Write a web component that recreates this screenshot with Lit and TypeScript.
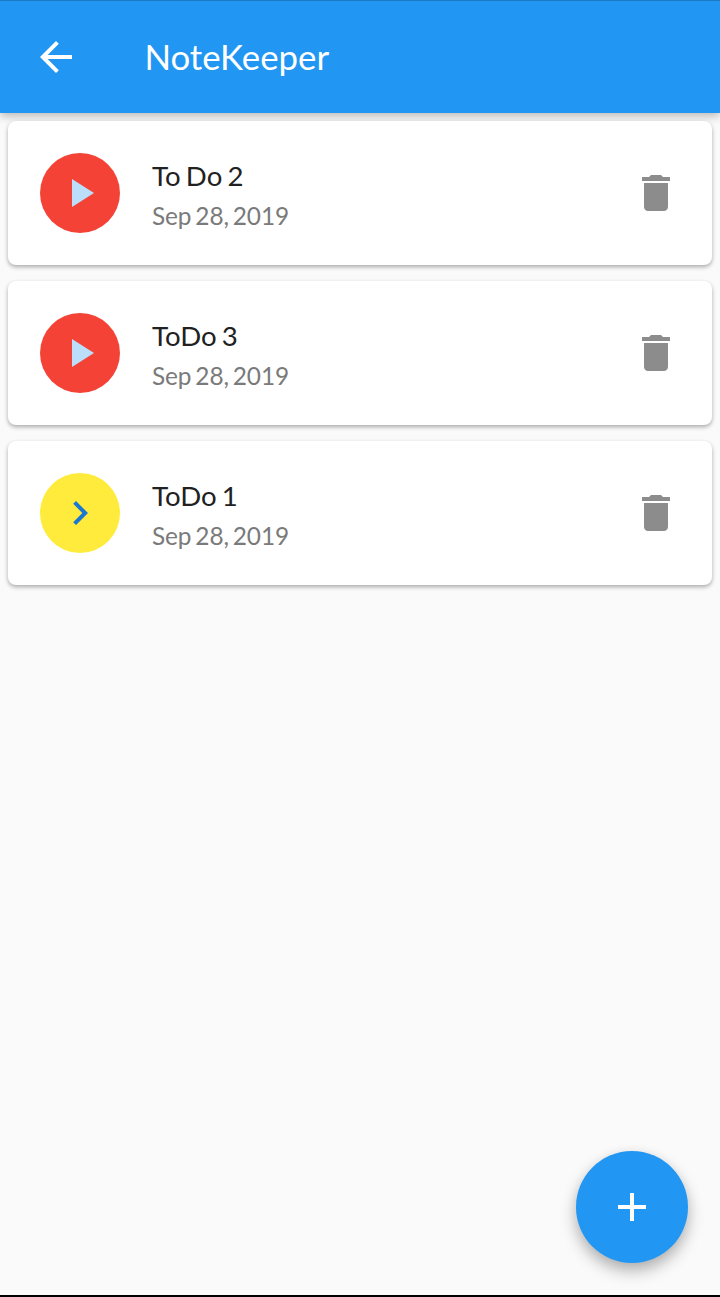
import { LitElement, html, css } from "lit";
import { customElement } from "lit/decorators.js";

const notes = [
  { title: "To Do 2", date: "Sep 28, 2019", high: true },
  { title: "ToDo 3", date: "Sep 28, 2019", high: true },
  { title: "ToDo 1", date: "Sep 28, 2019", high: false },
];

const icons = {
  back: "M20 11H7.83l5.59-5.59L12 4l-8 8 8 8 1.41-1.41L7.83 13H20v-2z",
  play: "M8 5v14l11-7z",
  chevron: "M10 6L8.59 7.41 13.17 12l-4.58 4.59L10 18l6-6z",
  trash: "M6 19c0 1.1.9 2 2 2h8c1.1 0 2-.9 2-2V7H6v12zM19 4h-3.5l-1-1h-5l-1 1H5v2h14V4z",
  add: "M19 13h-6v6h-2v-6H5v-2h6V5h2v6h6v2z",
};

const icon = (path: string, size = 48) =>
  html`<svg width=${size} height=${size} viewBox="0 0 24 24" fill="currentColor" aria-hidden="true"><path d=${path}></path></svg>`;

@customElement("app-root")
export class AppRoot extends LitElement {
  static styles = css`
    :host {
      display: flex;
      flex-direction: column;
      position: relative;
      box-sizing: border-box;
      height: 1297px;
      overflow: hidden;
      background: #fafafa;
      border-bottom: 2px solid #000;
      font-family: Lato, sans-serif;
    }
    svg { display: block; }
    button {
      display: flex;
      align-items: center;
      justify-content: center;
      border: 0;
      padding: 0;
      background: none;
      color: inherit;
    }
    .bar {
      display: flex;
      align-items: center;
      box-sizing: border-box;
      height: 113px;
      flex: none;
      padding: 0 32px 1px;
      border-top: 1px solid #1b7ac6;
      background: #2196f3;
      color: #fff;
      box-shadow: 0 3px 9px rgba(0, 0, 0, 0.27);
    }
    .heading {
      margin: 0 0 0 64.4px;
      font-size: 34.8px;
      line-height: 44px;
      font-weight: 400;
    }
    .list {
      display: flex;
      flex-direction: column;
      gap: 16px;
      padding: 8px;
    }
    .card {
      display: flex;
      align-items: center;
      box-sizing: border-box;
      height: 144px;
      padding: 0 32px;
      border-radius: 8px;
      background: #fff;
      box-shadow: 0 2px 4px rgba(0, 0, 0, 0.32);
    }
    .avatar {
      display: flex;
      align-items: center;
      justify-content: center;
      width: 80px;
      height: 80px;
      border-radius: 50%;
      background: #ffeb3b;
      color: #1976d2;
    }
    .avatar.high {
      background: #f44336;
      color: #bbdefb;
    }
    .text {
      flex: 1;
      margin-left: 32px;
      padding-top: 6px;
    }
    .title {
      font-size: 27.6px;
      line-height: 40px;
      color: #212121;
      word-spacing: -1.8px;
    }
    .date {
      font-size: 24.4px;
      line-height: 40px;
      color: #7a7a7a;
      letter-spacing: -0.1px;
      word-spacing: -2.2px;
    }
    .delete { color: #8c8c8c; }
    .fab {
      position: absolute;
      right: 32px;
      bottom: 32px;
      width: 112px;
      height: 112px;
      border-radius: 50%;
      background: #2196f3;
      color: #fff;
      box-shadow: 0 8px 16px rgba(0, 0, 0, 0.28), 0 2px 12px rgba(0, 0, 0, 0.06);
    }
  `;

  render() {
    return html`
      <header class="bar">
        <button aria-label="Back">${icon(icons.back)}</button>
        <h1 class="heading">NoteKeeper</h1>
      </header>
      <main class="list">
        ${notes.map(
          (note) => html`
            <article class="card">
              <div class="avatar ${note.high ? "high" : ""}">${icon(note.high ? icons.play : icons.chevron)}</div>
              <div class="text">
                <div class="title">${note.title}</div>
                <div class="date">${note.date}</div>
              </div>
              <button class="delete" aria-label="Delete">${icon(icons.trash)}</button>
            </article>
          `,
        )}
      </main>
      <button class="fab" aria-label="Add note">${icon(icons.add)}</button>
    `;
  }
}
